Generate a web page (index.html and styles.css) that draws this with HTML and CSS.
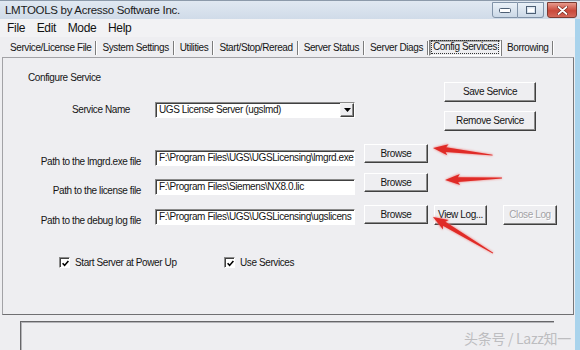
FILE: index.html
```html
<!DOCTYPE html>
<html>
<head>
<meta charset="utf-8">
<link rel="stylesheet" href="styles.css">
</head>
<body>
<div class="window">
  <div class="titlebar">
    <span class="title">LMTOOLS by Acresso Software Inc.</span>
    <div class="caption-btns">
      <span class="cbtn min"><svg width="12" height="5" viewBox="0 0 12 5"><rect x="0.5" y="0.5" width="11" height="4" rx="1" fill="#fff" stroke="#4d5f74"/></svg></span>
      <span class="cbtn max"><svg width="10" height="8" viewBox="0 0 10 8"><rect x="0.5" y="0.5" width="9" height="7" fill="none" stroke="#4d5f74"/><rect x="2" y="2.5" width="6" height="3.5" fill="#fff"/></svg></span>
      <span class="cbtn close"><svg width="11" height="9" viewBox="0 0 11 9"><path d="M1.5 1 L9.5 8 M9.5 1 L1.5 8" stroke="#6b1d14" stroke-width="3" stroke-linecap="round"/><path d="M1.5 1 L9.5 8 M9.5 1 L1.5 8" stroke="#fff" stroke-width="1.8" stroke-linecap="round"/></svg></span>
    </div>
  </div>
  <div class="menubar">
    <span>File</span><span>Edit</span><span>Mode</span><span>Help</span>
  </div>
  <div class="tabs">
    <span class="tab first">Service/License File</span>
    <span class="tab">System Settings</span>
    <span class="tab">Utilities</span>
    <span class="tab">Start/Stop/Reread</span>
    <span class="tab">Server Status</span>
    <span class="tab">Server Diags</span>
    <span class="tab active"><span class="focus">Config Services</span></span>
    <span class="tab">Borrowing</span>
  </div>
  <div class="panel">
    <div class="svc">
      <div class="svc-left">
        <div class="heading">Configure Service</div>
        <div class="svc-row">
          <span class="svc-label">Service Name</span>
          <div class="combo">
            <span class="combo-text">UGS License Server (ugslmd)</span>
            <span class="combo-btn"><svg width="7" height="4" viewBox="0 0 7 4"><path d="M0 0 H7 L3.5 4 Z" fill="#000"/></svg></span>
          </div>
        </div>
      </div>
      <div class="svc-buttons">
        <button class="btn wide">Save Service</button>
        <button class="btn wide">Remove Service</button>
      </div>
    </div>
    <div class="paths">
      <div class="path-row">
        <span class="plabel">Path to the lmgrd.exe file</span>
        <div class="field">F:\Program Files\UGS\UGSLicensing\lmgrd.exe</div>
        <button class="btn browse">Browse</button>
      </div>
      <div class="path-row">
        <span class="plabel">Path to the license file</span>
        <div class="field">F:\Program Files\Siemens\NX8.0.lic</div>
        <button class="btn browse">Browse</button>
      </div>
      <div class="path-row log">
        <span class="plabel">Path to the debug log file</span>
        <div class="field">F:\Program Files\UGS\UGSLicensing\ugslicens</div>
        <button class="btn browse">Browse</button>
        <button class="btn viewlog">View Log...</button>
        <button class="btn closelog" disabled>Close Log</button>
      </div>
    </div>
    <div class="checks">
      <label class="check first"><span class="box"><svg width="7" height="7" viewBox="0 0 7 7"><path d="M0.6 3.2 L2.6 5.4 L6.4 1" fill="none" stroke="#000" stroke-width="1.6"/></svg></span>Start Server at Power Up</label>
      <label class="check"><span class="box"><svg width="7" height="7" viewBox="0 0 7 7"><path d="M0.6 3.2 L2.6 5.4 L6.4 1" fill="none" stroke="#000" stroke-width="1.6"/></svg></span>Use Services</label>
    </div>
  </div>
  <div class="statusbar"></div>

  <svg class="arrows" width="580" height="350" viewBox="0 0 580 350">
    <defs>
      <filter id="soft" x="-20%" y="-50%" width="140%" height="200%"><feGaussianBlur stdDeviation="1.2"/></filter>
    </defs>
    <g transform="translate(433 148) rotate(6.8)">
      <path d="M0 0 L15 -6 L13 -2.6 L60 -0.6 L60 0.6 L13 2.6 L15 6 Z" fill="#f07a78" filter="url(#soft)"/>
      <path d="M0 0 L15 -5.5 L13 -2.4 L60 -0.4 L60 0.4 L13 2.4 L15 5.5 Z" fill="#e02b27"/>
    </g>
    <g transform="translate(445 180) rotate(-2)">
      <path d="M0 0 L15 -6 L13 -2.6 L57 -0.6 L57 0.6 L13 2.6 L15 6 Z" fill="#f07a78" filter="url(#soft)"/>
      <path d="M0 0 L15 -5.5 L13 -2.4 L57 -0.4 L57 0.4 L13 2.4 L15 5.5 Z" fill="#e02b27"/>
    </g>
    <g transform="translate(433 217) rotate(31)">
      <path d="M0 0 L15 -6 L13 -2.6 L70 -0.6 L70 0.6 L13 2.6 L15 6 Z" fill="#f07a78" filter="url(#soft)"/>
      <path d="M0 0 L15 -5.5 L13 -2.4 L70 -0.4 L70 0.4 L13 2.4 L15 5.5 Z" fill="#e02b27"/>
    </g>
  </svg>
  <div class="watermark">头条号 / Lazz知一</div>
</div>
</body>
</html>
```

FILE: styles.css
```css
html, body {
  margin: 0;
  padding: 0;
}

body {
  width: 580px;
  height: 350px;
  overflow: hidden;
  background: #eeeef1;
  font-family: "Liberation Sans", Arial, sans-serif;
  font-size: 10px;
  letter-spacing: -0.4px;
  color: #151515;
}

.window {
  position: relative;
  height: 350px;
  box-sizing: border-box;
  display: flex;
  flex-direction: column;
  background: #eeeef1;
  border-right: 5px solid #a9d3ec;
}

/* title bar */
.titlebar {
  height: 19px;
  box-sizing: border-box;
  margin-right: -5px;
  display: flex;
  align-items: center;
  padding-left: 5px;
  background: linear-gradient(#e0e8f1, #d0dbe8);
  border-top: 1px solid #8c9aaa;
}

.title {
  font-size: 11.5px;
  letter-spacing: -0.3px;
  color: #1b1b1b;
}

.caption-btns {
  margin-left: auto;
  align-self: flex-start;
  display: flex;
  margin-top: 1px;
  margin-right: 3px;
}

.cbtn {
  height: 16px;
  box-sizing: border-box;
  display: flex;
  align-items: center;
  justify-content: center;
  border: 1px solid #8193a8;
  background: linear-gradient(#eaf1f8, #cbd8e6);
}

.cbtn.min {
  width: 26px;
  border-radius: 0 0 0 3px;
}

.cbtn.max {
  width: 26px;
  border-left: none;
  border-radius: 0 0 3px 0;
}

.cbtn.close {
  width: 30px;
  margin-left: 3px;
  border: 1px solid #7d3a31;
  border-radius: 0 0 3px 3px;
  background: linear-gradient(#e79a8c, #c9483a 55%, #d4685a);
}

/* menu */
.menubar {
  height: 19px;
  display: flex;
  align-items: center;
  gap: 11.5px;
  padding-left: 7px;
  font-size: 12px;
  letter-spacing: -0.3px;
  background: #f2f2f4;
  color: #111;
}

/* tab strip */
.tabs {
  height: 20px;
  box-sizing: border-box;
  padding: 3px 0 0 5px;
  display: flex;
  align-items: center;
}

.tab {
  height: 14px;
  line-height: 14px;
  padding: 0 4px 0 5px;
  border-right: 1px solid #7c7c7c;
  box-shadow: 1px 0 0 #fff;
  margin-right: 1px;
}

.tab.active {
  height: 16px;
  line-height: 14px;
  box-sizing: border-box;
  padding: 0 2px;
  border: 1px solid;
  border-color: #7c7c7c #fff #fff #7c7c7c;
  box-shadow: inset 1px 1px 0 #a8a8a8, 1px 0 0 #7c7c7c;
  margin-right: 1px;
}

.focus {
  display: block;
  padding: 0 1px;
  line-height: 12px;
  outline: 1px dotted #333;
  outline-offset: 0;
}

/* panel */
.panel {
  margin-left: 2px;
  width: 572px;
  height: 264px;
  box-sizing: border-box;
  border: 1px solid #a2a2a6;
  border-bottom-color: #6f6f72;
  border-right-color: #77777a;
  padding-top: 13px;
}

.svc {
  display: flex;
}

.svc-left {
  width: 441px;
}

.heading {
  padding-left: 25px;
  line-height: 14px;
  height: 14px;
}

.svc-row {
  display: flex;
  align-items: center;
  margin-top: 17px;
}

.svc-label {
  width: 152px;
  box-sizing: border-box;
  padding-left: 69px;
}

.combo {
  width: 200px;
  height: 16px;
  box-sizing: border-box;
  display: flex;
  align-items: stretch;
  background: #fff;
  border: 1px solid;
  border-color: #8a8a8a #fff #fff #8a8a8a;
  box-shadow: inset 1px 1px 0 #404040;
}

.combo-text {
  flex: 1;
  padding-left: 3px;
  padding-top: 1px;
  line-height: 12px;
  white-space: nowrap;
  overflow: hidden;
}

.combo-btn {
  width: 14px;
  box-sizing: border-box;
  display: flex;
  align-items: center;
  justify-content: center;
  background: #eeeef1;
  border: 1px solid;
  border-color: #f4f4f4 #404040 #404040 #f4f4f4;
  box-shadow: inset -1px -1px 0 #8a8a8a;
}

.svc-buttons {
  padding-top: 11px;
  display: flex;
  flex-direction: column;
  gap: 9px;
}

/* buttons */
.btn {
  font: inherit;
  letter-spacing: inherit;
  color: #151515;
  margin: 0;
  padding: 0;
  box-sizing: border-box;
  background: #eeeef1;
  border: 1px solid;
  border-color: #ffffff #404040 #404040 #ffffff;
  box-shadow: inset -1px -1px 0 #8c8c8c;
  text-align: center;
}

.btn.wide {
  width: 92px;
  height: 20px;
}

.btn.browse {
  align-self: flex-start;
  width: 64px;
  height: 19px;
}

.btn.viewlog {
  align-self: flex-start;
  width: 53px;
  height: 20px;
  margin-left: 6px;
}

.btn.closelog {
  align-self: flex-start;
  width: 54px;
  height: 20px;
  margin-left: 16px;
  color: #a3a3a6;
  text-shadow: 1px 1px 0 #fff;
}

/* path rows */
.paths {
  margin-top: 13px;
  display: flex;
  flex-direction: column;
  gap: 7px;
}

.path-row {
  display: flex;
  align-items: flex-end;
  height: 22px;
}

.path-row.log {
  height: 20px;
  margin-top: 3px;
}

.plabel {
  width: 152px;
  box-sizing: border-box;
  text-align: right;
  padding-right: 14px;
  line-height: 14px;
  margin-bottom: -3px;
  white-space: nowrap;
}

.field {
  width: 200px;
  height: 16px;
  box-sizing: border-box;
  margin-right: 9px;
  padding: 1px 0 0 3px;
  line-height: 12px;
  white-space: nowrap;
  overflow: hidden;
  background: #fff;
  border: 1px solid;
  border-color: #8a8a8a #fff #fff #8a8a8a;
  box-shadow: inset 1px 1px 0 #404040;
}

/* checkboxes */
.checks {
  margin-top: 31px;
  padding-left: 56px;
  display: flex;
  align-items: center;
  height: 14px;
}

.check {
  display: flex;
  align-items: center;
  gap: 5px;
  line-height: 14px;
}

.check.first {
  width: 165px;
}

.box {
  width: 11px;
  height: 11px;
  box-sizing: border-box;
  display: flex;
  align-items: center;
  justify-content: center;
  background: #fff;
  border: 1px solid;
  border-color: #8a8a8a #fff #fff #8a8a8a;
  box-shadow: inset 1px 1px 0 #404040;
  padding: 1px 0 0 1px;
}

/* status bar */
.statusbar {
  margin-top: 6px;
  margin-left: 20px;
  width: 534px;
  height: 30px;
  box-sizing: border-box;
  border-top: 1px solid #666669;
  border-left: 1px solid #666669;
  box-shadow: inset 1px 1px 0 #b4b4b8;
}

/* overlays */
.arrows {
  position: absolute;
  left: 0;
  top: 0;
  pointer-events: none;
}

.watermark {
  position: absolute;
  right: 4px;
  bottom: 2px;
  font-family: "Noto Sans CJK SC", "Noto Sans", sans-serif;
  font-size: 14px;
  letter-spacing: -0.3px;
  color: #bdbdc0;
}
```
